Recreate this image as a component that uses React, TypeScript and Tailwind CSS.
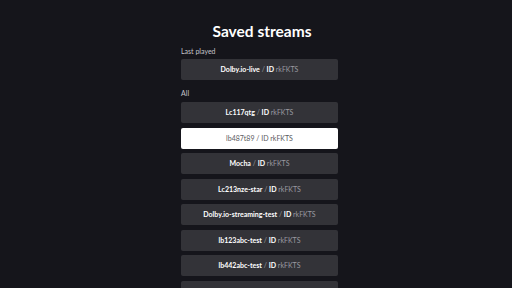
import React from 'react';

type Stream = { name: string; id: string; active?: boolean };

const lastPlayed: Stream = { name: 'Dolby.io-live', id: 'rkFKTS' };

const streams: Stream[] = [
  { name: 'Lc117qtg', id: 'rkFKTS' },
  { name: 'lb487t89', id: 'rkFKTS', active: true },
  { name: 'Mocha', id: 'rkFKTS' },
  { name: 'Lc213nze-star', id: 'rkFKTS' },
  { name: 'Dolby.io-streaming-test', id: 'rkFKTS' },
  { name: 'lb123abc-test', id: 'rkFKTS' },
  { name: 'lb442abc-test', id: 'rkFKTS' },
];

const StreamButton: React.FC<{ stream: Stream }> = ({ stream }) => {
  if (stream.active) {
    return (
      <button className="flex h-[21px] w-full shrink-0 items-center justify-center whitespace-pre rounded-[2px] bg-white text-[7px] leading-none text-[#5a5a60]">
        {stream.name} / ID rkFKTS
      </button>
    );
  }
  return (
    <button className="flex h-[21px] w-full shrink-0 items-center justify-center whitespace-pre rounded-[2px] bg-[#333338] text-[7px] leading-none">
      <span className="font-bold text-white">{stream.name}</span>
      <span className="text-[#9a9aa0]"> / </span>
      <span className="font-bold text-white">ID</span>
      <span className="text-[#9a9aa0]"> {stream.id}</span>
    </button>
  );
};

export default function App() {
  return (
    <div
      className="h-[288px] w-[512px] overflow-hidden bg-[#15151b]"
      style={{ fontFamily: 'Lato, "Noto Sans", sans-serif' }}
    >
      <div className="ml-[181px] flex w-[157px] flex-col">
        <h1 className="mt-[21px] pl-[5px] text-center text-[15.5px] font-bold leading-[20px] text-white">
          Saved streams
        </h1>

        {/* Last played */}
        <p className="mt-[5px] text-[7px] leading-[10px] text-[#c4c4ca]">Last played</p>
        <div className="mt-[3px] flex flex-col">
          <StreamButton stream={lastPlayed} />
        </div>

        {/* All */}
        <p className="mt-[8px] text-[7px] leading-[10px] text-[#c4c4ca]">All</p>
        <div className="mt-[4px] flex flex-col gap-[4.5px]">
          {streams.map((s) => (
            <StreamButton key={s.name} stream={s} />
          ))}
          {/* next row, scrolled past the bottom edge */}
          <div className="h-[21px] w-full shrink-0 rounded-[2px] bg-[#333338]" />
        </div>
      </div>
    </div>
  );
}
